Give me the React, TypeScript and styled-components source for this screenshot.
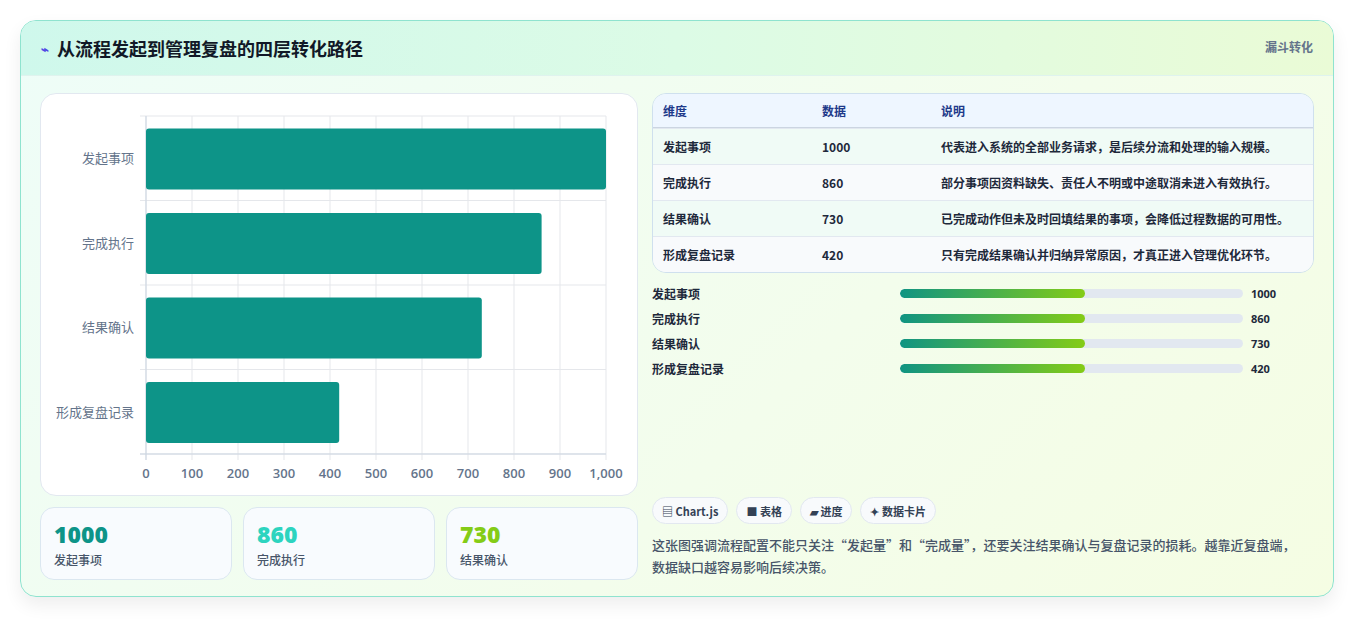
import React from "react";
import styled, { createGlobalStyle } from "styled-components";

const Global = createGlobalStyle`
  body { margin: 0; background: #fff; font-family: "Noto Sans CJK SC", "Noto Sans", sans-serif; }
`;
const Page = styled.div`padding: 20px 20px 22px 20px;`;
const Card = styled.div`
  border: 1px solid #8fe3cf; border-radius: 16px; overflow: hidden;
  background: linear-gradient(135deg, #eefdf8 0%, #f3fdec 60%, #f5fde3 100%);
  box-shadow: 0 8px 18px rgba(0,0,0,0.07);
`;
const Header = styled.div`
  height: 54px; display: flex; align-items: center; justify-content: space-between;
  padding: 0 20px 0 20px; border-bottom: 1px solid #dff3ee;
  background: linear-gradient(90deg, #cff8ec 0%, #dcfbe6 50%, #eafbd6 100%);
`;
const Title = styled.h1`
  margin: 0; font-size: 18px; font-weight: 700; color: #111827; display: flex; align-items: center; gap: 8px;
`;
const Bolt = styled.span`color: #4f46e5; font-size: 13px;`;
const Tag = styled.span`font-size: 12px; font-weight: 700; color: #64748b; align-self: flex-start; margin-top: 17px;`;
const Body = styled.div`display: grid; grid-template-columns: 598px 1fr; gap: 14px; padding: 17px 19px 16px 19px;`;
const Col = styled.div`display: flex; flex-direction: column;`;
const ChartCard = styled.div`
  height: 403px; background: #fff; border: 1px solid #e2e8f0; border-radius: 16px; box-sizing: border-box;
`;
const Stats = styled.div`display: grid; grid-template-columns: repeat(3, 1fr); gap: 11px; margin-top: 11px;`;
const Stat = styled.div`
  height: 73px; box-sizing: border-box; border: 1px solid #dbe7f0; border-radius: 14px; background: #f8fbfe;
  padding: 11px 13px;
`;
const StatNum = styled.div<{ c: string }>`font-family: "Open Sans", sans-serif; font-size: 23px; font-weight: 800; color: ${p => p.c}; line-height: 30px;`;
const StatLabel = styled.div`font-size: 12px; color: #475569; font-weight: 500; margin-top: 2px;`;
const Table = styled.div`border: 1px solid #cfe0ee; border-radius: 14px; overflow: hidden;`;
const Row = styled.div<{ bg: string; h: number }>`
  display: grid; grid-template-columns: 159px 119px 1fr; height: ${p => p.h}px; align-items: center; padding-left: 10px;
  background: ${p => p.bg}; border-top: 1px solid #e2e8f0; font-size: 12px; font-weight: 600; color: #1e293b;
  &:first-child { border-top: none; border-bottom: 1px solid #cbd5e1; color: #1e3a8a; }
`;
const Bars = styled.div`display: flex; flex-direction: column; gap: 7px; margin-top: 11px;`;
const BarRow = styled.div`display: grid; grid-template-columns: 248px 343px auto; align-items: center; height: 18px; font-size: 12px; font-weight: 600; color: #1e293b;`;
const Track = styled.div`height: 9px; border-radius: 5px; background: #e2e8f0; overflow: hidden;`;
const Fill = styled.div`height: 100%; border-radius: 5px; background: linear-gradient(90deg, #109482, #84cc16);`;
const Val = styled.span`padding-left: 8px; font-family: "Open Sans", sans-serif; font-weight: 700; font-size: 11px;`;
const Chips = styled.div`display: flex; gap: 8px; margin-top: auto;`;
const Chip = styled.span`
  height: 27px; box-sizing: border-box; padding: 0 9px; border: 1px solid #e2e8f0; border-radius: 14px; background: #f8fafc;
  display: inline-flex; align-items: center; gap: 3px; font-size: 11px; font-weight: 700; color: #334155;
`;
const Note = styled.p`margin: 10px 0 2px; font-size: 13px; line-height: 22px; color: #475569; font-weight: 500; padding-right: 10px;`;

const data = [["发起事项", 1000, "代表进入系统的全部业务请求，是后续分流和处理的输入规模。"], ["完成执行", 860, "部分事项因资料缺失、责任人不明或中途取消未进入有效执行。"], ["结果确认", 730, "已完成动作但未及时回填结果的事项，会降低过程数据的可用性。"], ["形成复盘记录", 420, "只有完成结果确认并归纳异常原因，才真正进入管理优化环节。"]] as const;

function Chart() {
  const L = 105, R = 565, T = 22, B = 360, band = (B - T) / 4;
  const x = (v: number) => L + (v / 1000) * (R - L);
  return (
    <svg width="596" height="401" style={{ display: "block" }}>
      {Array.from({ length: 11 }, (_, i) => (
        <g key={i}>
          <line x1={x(i * 100)} x2={x(i * 100)} y1={T} y2={B + 6} stroke="#e5e7eb" />
          <text x={x(i * 100)} y={384} textAnchor="middle" fontSize="13" fill="#64748b" fontFamily="Open Sans" fontWeight="600">{i === 10 ? "1,000" : i * 100}</text>
        </g>
      ))}
      {[0, 1, 2, 3, 4].map(i => <line key={i} x1={L - 6} x2={R} y1={T + i * band} y2={T + i * band} stroke="#e5e7eb" />)}
      <line x1={L - 6} x2={R} y1={B} y2={B} stroke="#cbd5e1" />
      <line x1={L} x2={L} y1={T} y2={B + 6} stroke="#cbd5e1" />
      {data.map(([n, v], i) => (
        <g key={n}>
          <rect x={L} y={T + i * band + 12.5} width={x(v) - L} height={61} rx="3" fill="#0d9488" />
          <text x={L - 12} y={T + i * band + band / 2 + 5} textAnchor="end" fontSize="13" fill="#64748b">{n}</text>
        </g>
      ))}
    </svg>
  );
}

export default function App() {
  return (
    <Page>
      <Global />
      <Card>
        <Header>
          <Title><Bolt>⌁</Bolt>从流程发起到管理复盘的四层转化路径</Title>
          <Tag>漏斗转化</Tag>
        </Header>
        <Body>
          <Col>
            <ChartCard><Chart /></ChartCard>
            <Stats>
              <Stat><StatNum c="#0d9488">1000</StatNum><StatLabel>发起事项</StatLabel></Stat>
              <Stat><StatNum c="#2dd4bf">860</StatNum><StatLabel>完成执行</StatLabel></Stat>
              <Stat><StatNum c="#84cc16">730</StatNum><StatLabel>结果确认</StatLabel></Stat>
            </Stats>
          </Col>
          <Col>
            <Table>
              <Row bg="#eef6ff" h={33}><span>维度</span><span>数据</span><span>说明</span></Row>
              {data.map(([n, v, d], i) => (
                <Row key={n} bg={i % 2 ? "#f8fafc" : "#f0fbf6"} h={35}><span>{n}</span><span>{v}</span><span>{d}</span></Row>
              ))}
            </Table>
            <Bars>
              {data.map(([n, v]) => (
                <BarRow key={n}><span>{n}</span><Track><Fill style={{ width: "54%" }} /></Track><Val>{v}</Val></BarRow>
              ))}
            </Bars>
            <Chips>
              <Chip>▤ Chart.js</Chip><Chip>■ 表格</Chip><Chip>▰ 进度</Chip><Chip>✦ 数据卡片</Chip>
            </Chips>
            <Note>这张图强调流程配置不能只关注“发起量”和“完成量”，还要关注结果确认与复盘记录的损耗。越靠近复盘端，数据缺口越容易影响后续决策。</Note>
          </Col>
        </Body>
      </Card>
    </Page>
  );
}
